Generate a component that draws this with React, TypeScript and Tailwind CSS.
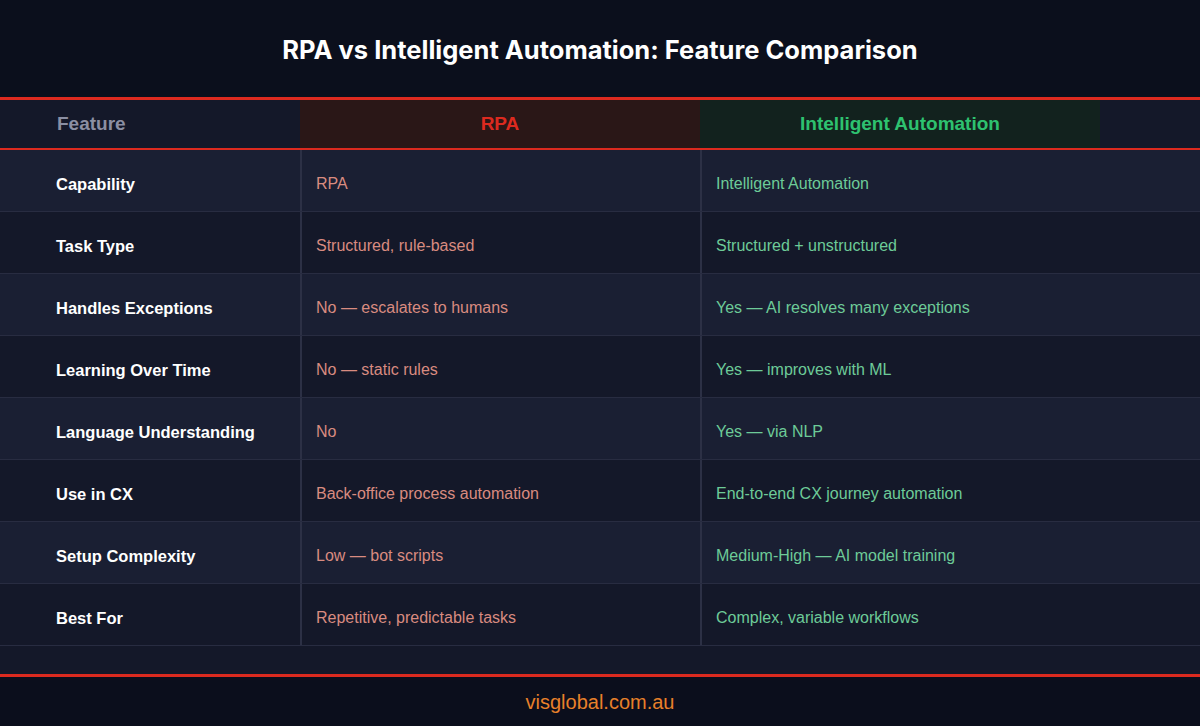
import React from "react";

const rows: [string, string, string][] = [
  ["Capability", "RPA", "Intelligent Automation"],
  ["Task Type", "Structured, rule-based", "Structured + unstructured"],
  ["Handles Exceptions", "No — escalates to humans", "Yes — AI resolves many exceptions"],
  ["Learning Over Time", "No — static rules", "Yes — improves with ML"],
  ["Language Understanding", "No", "Yes — via NLP"],
  ["Use in CX", "Back-office process automation", "End-to-end CX journey automation"],
  ["Setup Complexity", "Low — bot scripts", "Medium-High — AI model training"],
  ["Best For", "Repetitive, predictable tasks", "Complex, variable workflows"],
];

export default function App() {
  return (
    <div
      className="w-[1200px] h-[726px] flex flex-col bg-[#141829] overflow-hidden"
      style={{ fontFamily: '"Liberation Sans", Arial, sans-serif' }}
    >
      <div className="h-[97px] bg-[#0b0f1c] flex items-center justify-center">
        <h1
          className="text-[25.5px] font-bold text-white pt-[4px]"
          style={{ fontFamily: 'Inter, "Liberation Sans", sans-serif' }}
        >
          RPA vs Intelligent Automation: Feature Comparison
        </h1>
      </div>
      <div className="h-[3px] bg-[#dc2a1f]" />
      <div className="h-[48px] grid grid-cols-[300px_400px_400px_100px] bg-[#141829]">
        <div className="flex items-center pl-[57px] text-[19px] font-bold text-[#8b8fa3]">Feature</div>
        <div className="flex items-center justify-center bg-[#2a1717] text-[19px] font-bold text-[#dc2a1f]">RPA</div>
        <div className="flex items-center justify-center bg-[#12221e] text-[19px] font-bold text-[#2ec270]">
          Intelligent Automation
        </div>
        <div />
      </div>
      <div className="h-[2px] bg-[#dc2a1f]" />
      {rows.map(([f, r, i], idx) => (
        <div
          key={f}
          className={`h-[62px] flex border-b border-[#282c41] ${idx % 2 === 0 ? "bg-[#1a1f33]" : "bg-[#141829]"}`}
        >
          <div className="w-[300px] flex items-center pl-[56px] pt-[8px] text-[16.5px] font-bold text-white">{f}</div>
          <div className="w-[2px] bg-[#2c3045]" />
          <div className="w-[398px] flex items-center pl-[14px] pt-[6px] text-[16px] text-[#d98b80]">{r}</div>
          <div className="w-[2px] bg-[#2c3045]" />
          <div className="flex-1 flex items-center pl-[14px] pt-[6px] text-[16px] text-[#6dcb98]">{i}</div>
        </div>
      ))}
      <div className="flex-1" />
      <div className="h-[3px] bg-[#dc2a1f]" />
      <div className="h-[49px] bg-[#0b0e1c] flex items-center justify-center text-[20px] text-[#e8802a]">
        visglobal.com.au
      </div>
    </div>
  );
}
